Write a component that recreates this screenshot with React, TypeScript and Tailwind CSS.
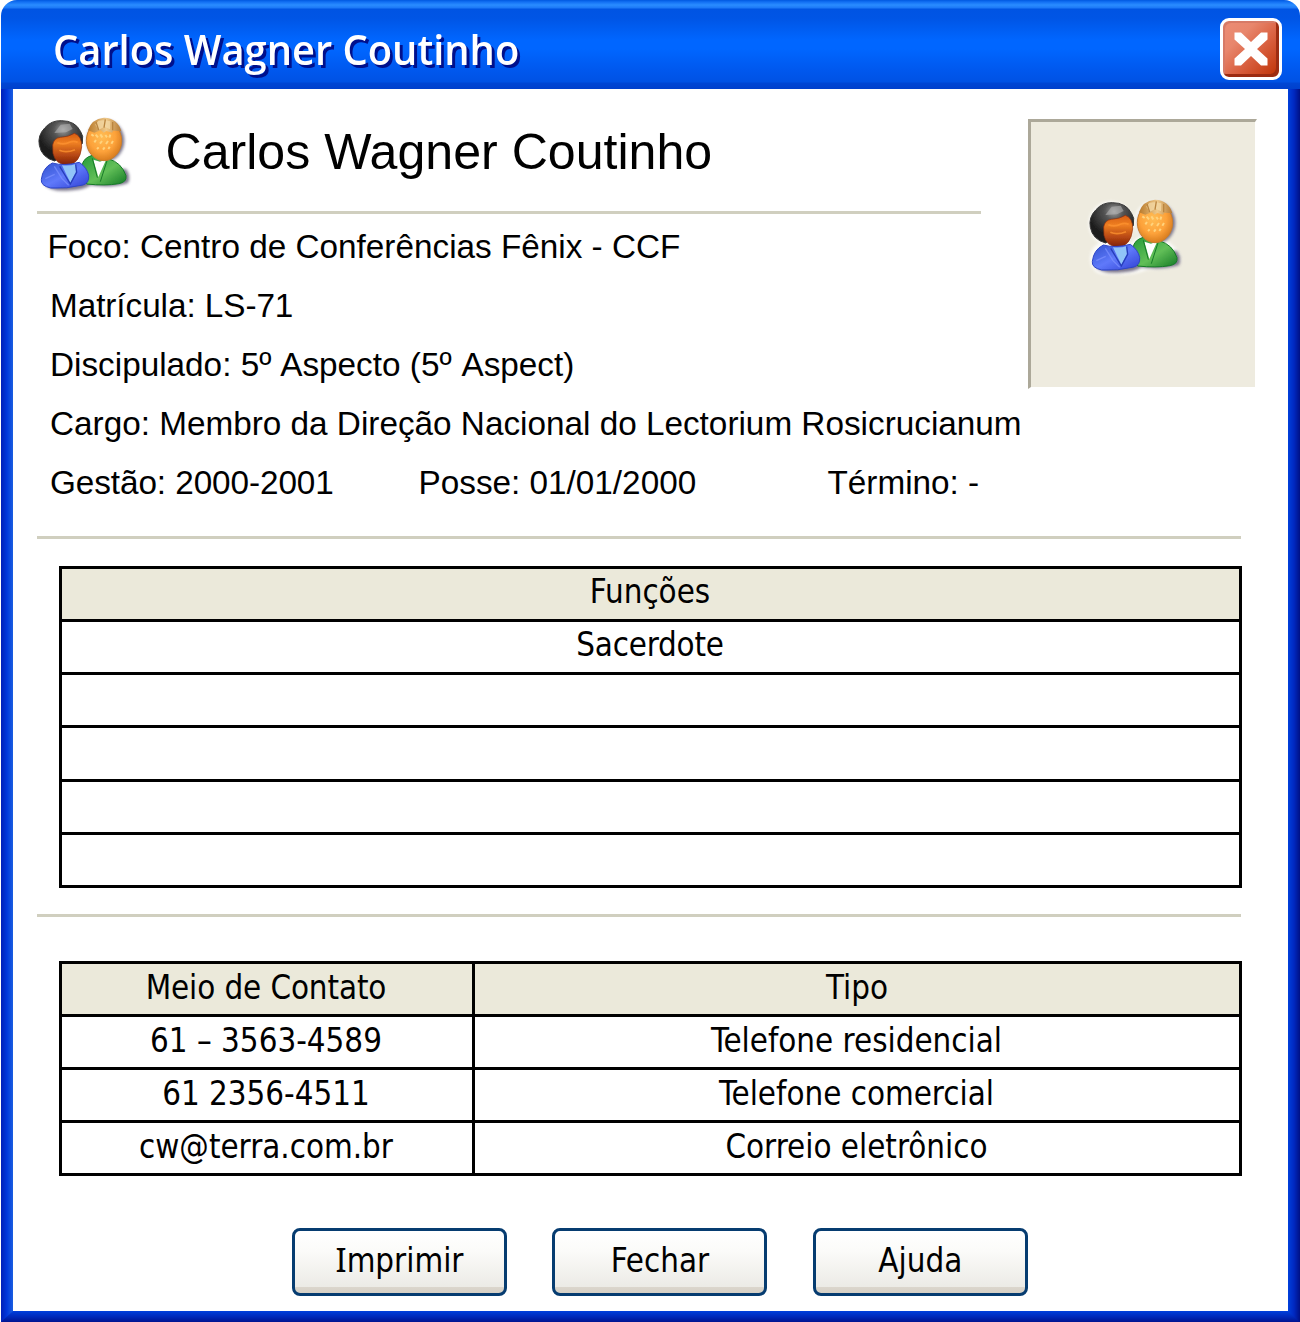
import type { ReactNode } from "react";

function UsersIcon({ id, halo }: { id: string; halo?: boolean }) {
  const g = (name: string) => `${id}-${name}`;
  const u = (name: string) => `url(#${id}-${name})`;
  return (
    <svg viewBox="0 0 330 300" className="block h-[100px] w-[110px] shrink-0" aria-hidden="true">
      <defs>
        <radialGradient id={g("hair")} cx="0.55" cy="0.22" r="0.6">
          <stop offset="0" stopColor="#a0a0a0" />
          <stop offset="0.35" stopColor="#555" />
          <stop offset="1" stopColor="#1c1c1c" />
        </radialGradient>
        <linearGradient id={g("face")} x1="0" y1="0" x2="0" y2="1">
          <stop offset="0" stopColor="#d65c12" />
          <stop offset="0.3" stopColor="#ee7f22" />
          <stop offset="0.65" stopColor="#bc4c14" />
          <stop offset="1" stopColor="#7c1d08" />
        </linearGradient>
        <radialGradient id={g("face2")} cx="0.45" cy="0.4" r="0.62">
          <stop offset="0" stopColor="#ffbd55" />
          <stop offset="0.6" stopColor="#fda23a" />
          <stop offset="1" stopColor="#d67a1e" />
        </radialGradient>
        <linearGradient id={g("blond")} x1="0" y1="0" x2="1" y2="0">
          <stop offset="0" stopColor="#b8792a" />
          <stop offset="0.55" stopColor="#efc98a" />
          <stop offset="1" stopColor="#b57a34" />
        </linearGradient>
        <linearGradient id={g("blue")} x1="0" y1="0" x2="1" y2="1">
          <stop offset="0" stopColor="#2f50cc" />
          <stop offset="0.5" stopColor="#5f79fa" />
          <stop offset="1" stopColor="#2f3fd4" />
        </linearGradient>
        <linearGradient id={g("green")} x1="0" y1="0" x2="1" y2="1">
          <stop offset="0" stopColor="#249a3a" />
          <stop offset="0.55" stopColor="#62bf58" />
          <stop offset="1" stopColor="#137a25" />
        </linearGradient>
        <filter id={g("soft")} x="-10%" y="-10%" width="120%" height="120%">
          <feGaussianBlur stdDeviation="2" />
        </filter>
        <filter id={g("shade")} x="-20%" y="-20%" width="140%" height="140%">
          <feGaussianBlur stdDeviation="4" />
        </filter>
      </defs>
      {halo && (
        <g filter={u("shade")} fill="#fff" stroke="#fff" strokeWidth="14" opacity="0.8">
          <path d="M34 215 Q36 180 66 172 L150 174 L190 150 L240 160 Q290 185 292 220 Q280 242 200 240 Q150 262 60 254 Q34 245 34 215Z" />
          <circle cx="222" cy="102" r="54" />
          <circle cx="90" cy="110" r="60" />
        </g>
      )}
      <g filter={u("shade")} fill="#443c5c" opacity="0.7">
        <path d="M42 236 Q60 260 110 257 Q165 256 180 241 Q250 250 294 234 Q304 214 288 192 L160 190Z" />
        <ellipse cx="227" cy="107" rx="56" ry="62" />
      </g>
      <g filter={u("soft")}>
        <path d="M156 182 Q160 158 187 151 L200 157 L236 162 Q274 172 288 212 Q291 232 266 236 Q225 243 170 237Z" fill={u("green")} stroke="#167b28" strokeWidth="3" />
        <path d="M190 164 L210 170 L229 163 L205 216Z" fill="#fff" />
        <path d="M232 164 L211 230 M187 160 L202 218" stroke="#167b28" strokeWidth="3" fill="none" />
        <ellipse cx="222" cy="107" rx="53" ry="60" fill={u("face2")} stroke="#c67e30" strokeWidth="3" />
        <path d="M184 88 l7 5 m6 -4 l7 8 m7 -9 l6 9 m9 -7 l5 7 m10 -8 l-3 9 M193 112 l5 -7 m12 11 l6 -8 m12 9 l6 -9 m10 8 l5 -8 M201 132 l5 -5 m13 7 l5 -7 m11 5 l4 -7" stroke="#ffd37d" strokeWidth="6" fill="none" />
        <path d="M174 76 Q184 42 222 38 Q264 40 274 79 L250 77 L246 83 L229 78 L221 83 L212 76 L193 83Z" fill={u("blond")} />
        <path d="M205 47 Q220 43 241 49 L240 73 L223 65 L206 75 L196 59Z" fill="#f3d7a4" opacity="0.8" />
        <path d="M226 43 L222 68 M248 51 L248 76 M198 51 L206 75" stroke="#ba8540" strokeWidth="4" fill="none" />
        <path d="M28 121 Q22 91 45 68 Q64 46 94 47 Q136 47 152 80 L158 94 L157 116 L145 120 L74 168 Q35 158 28 121Z" fill={u("hair")} stroke="#353535" strokeWidth="3" />
        <path d="M68 120 Q72 99 91 97 Q116 96 133 85 Q156 93 155 126 Q150 177 111 181 Q76 178 69 145Z" fill={u("face")} stroke="#8f2f0d" strokeWidth="2" />
        <path d="M82 113 Q102 121 120 111 Q132 107 143 112 M88 136 Q109 145 135 134" stroke="#ff9432" strokeWidth="5" fill="none" opacity="0.75" />
        <path d="M73 84 L92 59 L119 56 L128 72 L108 82Z" fill="#b8b8b8" opacity="0.55" />
        <path d="M34 223 Q38 188 67 174 Q102 184 148 172 Q171 188 176 211 Q178 235 159 240 Q111 252 62 249 Q31 242 34 223Z" fill={u("blue")} stroke="#2d45c6" strokeWidth="3" />
        <path d="M96 181 Q120 183 136 178 L138 200 L121 233Z" fill="#91c4f8" />
        <path d="M137 178 L140 202 L121 237 L89 184" stroke="#263dba" strokeWidth="4" fill="none" />
        <path d="M73 184 L96 221 L116 241 M46 221 L74 208" stroke="#7d93ff" strokeWidth="4" fill="none" opacity="0.7" />
      </g>
    </svg>
  );
}

function Cell({ children, className = "" }: { children?: ReactNode; className?: string }) {
  return <div className={`flex justify-center leading-[46px] ${className}`}>{children}</div>;
}

function Row({ children, header }: { children?: ReactNode; header?: boolean }) {
  return (
    <div className={`flex h-[53.15px] border-b-[3px] border-black ${header ? "bg-[#ebe9da]" : "bg-white"}`}>{children}</div>
  );
}

function DialogButton({ children }: { children: ReactNode }) {
  return (
    <button className="flex h-[68px] w-[215px] items-start justify-center rounded-[8px] border-[3px] border-[#063c70] bg-[linear-gradient(180deg,#ffffff_0px,#fbfbf9_20px,#ecebe6_55.5px,#dbd6cd_56px,#d6d0c5_100%)] pt-px leading-[59px]">
      <span className="block h-[59px]">{children}</span>
    </button>
  );
}

const functions = ["Sacerdote", "", "", "", ""];
const contacts = [
  ["61 – 3563-4589", "Telefone residencial"],
  ["61 2356-4511", "Telefone comercial"],
  ["cw@terra.com.br", "Correio eletrônico"],
];

export default function App() {
  return (
    <div className="h-[1322px] w-[1300px] overflow-hidden bg-white pl-px text-black">
      <div className="flex h-full flex-col overflow-hidden rounded-t-[16px]">
        <header className="flex h-[89px] shrink-0 items-start justify-between bg-[linear-gradient(180deg,#0058e0_0px,#1270f4_2px,#2a8cff_5px,#1c78f6_8px,#0054e3_9px,#0055e5_18px,#0066ff_40px,#0066ff_49px,#0058ee_70px,#0052e4_82px,#0046d4_83px,#0040cc_89px)] pl-[52px] pr-[18px]">
          <h1 className="origin-left scale-x-[0.949] whitespace-nowrap pt-[19px] font-['Open_Sans'] text-[42px] font-semibold leading-[60px] text-white [text-shadow:3px_3px_0_#00108c]">
            Carlos Wagner Coutinho
          </h1>
          <button
            aria-label="Fechar janela"
            className="mt-[18px] flex size-[62px] items-center justify-center rounded-[9px] border-[3px] border-white bg-[linear-gradient(135deg,#ec8d75_0%,#e8866c_30%,#db6445_55%,#c43b11_90%)] shadow-[inset_-3px_-3px_0_#9c2c12,inset_2px_2px_0_#d77a66]"
          >
            <svg viewBox="0 0 34 34" className="size-[34px]">
              <path d="M0.5 0.5H7L17 10L27 0.5H33.5V7.5L23 17L33.5 26.5V33.5H27L17 24L7 33.5H0.5V26.5L11 17L0.5 7.5Z" fill="#fff" />
            </svg>
          </button>
        </header>

        <div className="flex h-[1222px] shrink-0">
          <div className="w-3 shrink-0 bg-[linear-gradient(90deg,#0020b8,#0038dc_50%,#1a5ee0)]" />
          <main className="flex min-w-0 grow flex-col bg-white pl-6">
            <div className="flex h-[447px] shrink-0">
              <section className="w-[991px] shrink-0 font-['Liberation_Sans'] text-[33.3px] leading-[59px]">
                <div className="flex h-[122px] w-[944px] pt-4">
                  <div className="-ml-[7px]">
                    <UsersIcon id="header-users" />
                  </div>
                  <h2 className="ml-[25.5px] mt-[17px] whitespace-nowrap text-[50.1px] leading-[60px]">Carlos Wagner Coutinho</h2>
                </div>
                <div className="h-[3px] w-[944px] bg-[#d0cfbf]" />
                <div className="whitespace-nowrap pl-[11px] pt-[3px]">
                  <p className="-ml-px pl-[0.5px]">Foco: Centro de Conferências Fênix - CCF</p>
                  <p className="pl-0.5 tracking-[-0.06px]">Matrícula: LS-71</p>
                  <p className="pl-0.5">
                    Discipulado: 5º<span className="ml-[1.5px]"> Aspecto (5º</span>
                    <span className="ml-[2.5px]"> Aspect)</span>
                  </p>
                  <p className="pl-0.5">Cargo: Membro da Direção Nacional do Lectorium Rosicrucianum</p>
                  <div className="flex pl-0.5">
                    <p className="w-[368.5px] tracking-[-0.08px]">Gestão: 2000-2001</p>
                    <p className="w-[409px]">Posse: 01/01/2000</p>
                    <p>Término: -</p>
                  </div>
                </div>
              </section>
              <aside className="mt-[30px] h-[270px] w-[229px] shrink-0 border-b-2 border-l-[3px] border-r-2 border-t-[3px] border-b-white border-l-[#aca899] border-r-white border-t-[#aca899] bg-[#eeebdf] pl-[50px] pt-[65px]">
                <UsersIcon id="photo-users" halo />
              </aside>
            </div>

            <div className="h-[3px] w-[1204px] shrink-0 bg-[#d0cfbf]" />

            <div className="font-['DejaVu_Sans_Condensed'] text-[32.8px]">
              <div className="ml-[22px] mt-[27px] w-[1183px] border-x-[3px] border-t-[3px] border-black">
                <Row header>
                  <Cell className="grow pr-px">Funções</Cell>
                </Row>
                {functions.map((name, i) => (
                  <Row key={i}>
                    <Cell className="grow pr-px tracking-[-0.2px]">{name}</Cell>
                  </Row>
                ))}
              </div>

              <div className="mt-[26px] h-[3px] w-[1204px] bg-[#d0cfbf]" />

              <div className="ml-[22px] mt-[44px] w-[1183px] border-x-[3px] border-t-[3px] border-black">
                <Row header>
                  <Cell className="w-[413px] border-r-[3px] border-black pr-0.5 pt-px tracking-[-0.1px]">Meio de Contato</Cell>
                  <Cell className="grow pt-px">Tipo</Cell>
                </Row>
                {contacts.map(([contact, kind]) => (
                  <Row key={contact}>
                    <Cell className="w-[413px] border-r-[3px] border-black pr-0.5 pt-px">{contact}</Cell>
                    <Cell className="grow pr-px pt-px">{kind}</Cell>
                  </Row>
                ))}
              </div>

              <div className="ml-[255px] mt-[51.5px] flex gap-[45.4px]">
                <DialogButton>
                  <span className="font-['Noto_Sans'] leading-none">I</span>mprimir
                </DialogButton>
                <DialogButton>Fechar</DialogButton>
                <DialogButton>Ajuda</DialogButton>
              </div>
            </div>
          </main>
          <div className="w-3 shrink-0 bg-[linear-gradient(90deg,#0040dc,#0028c0_50%,#001084)]" />
        </div>

        <div className="flex h-[11px] shrink-0 justify-between bg-[linear-gradient(180deg,#0040dc,#0028b8_55%,#001490)]">
          <div className="w-3 bg-[linear-gradient(90deg,#0020b8,#0038dc_50%,#1a5ee0)] [clip-path:polygon(0_0,100%_0,0_100%)]" />
          <div className="w-3 bg-[linear-gradient(90deg,#0040dc,#0028c0_50%,#001084)] [clip-path:polygon(0_0,100%_0,100%_100%)]" />
        </div>
      </div>
    </div>
  );
}
